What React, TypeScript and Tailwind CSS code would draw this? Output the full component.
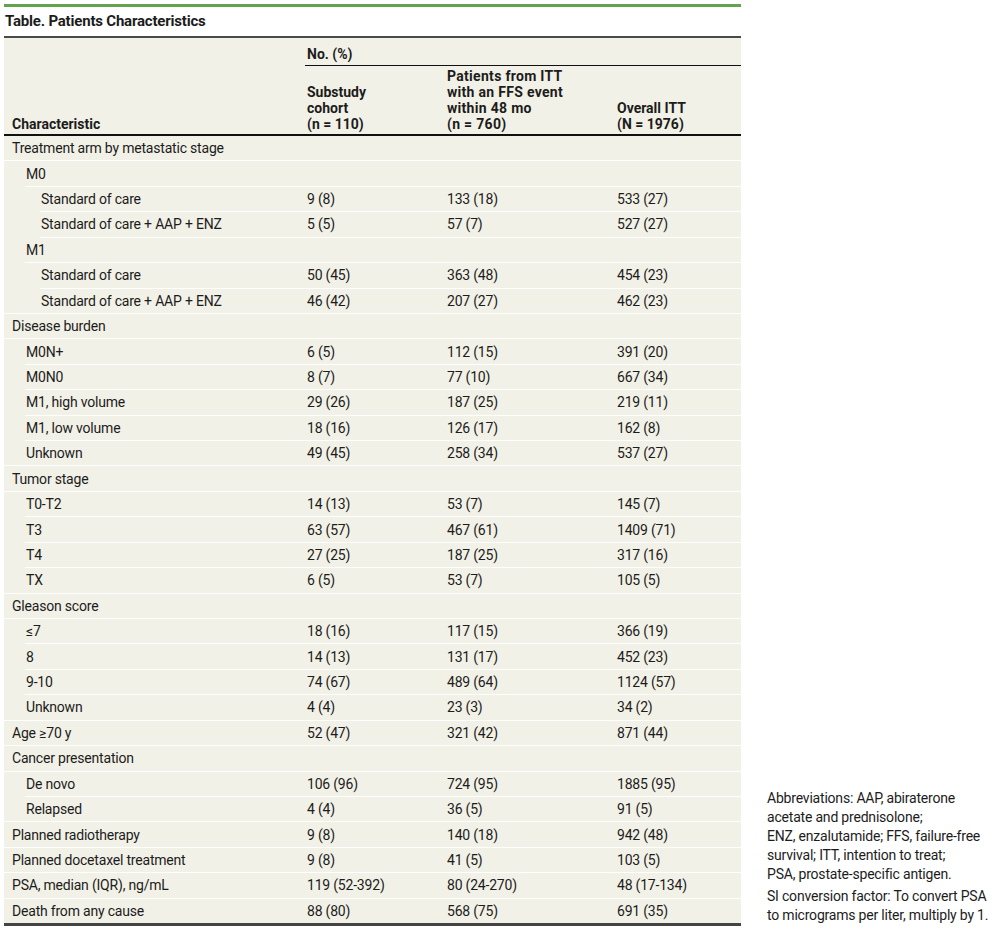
import React from "react";

type Row = [string, number, string, string, string];

const rows: Row[] = [
  ["Treatment arm by metastatic stage", 0, "", "", ""],
  ["M0", 1, "", "", ""],
  ["Standard of care", 2, "9 (8)", "133 (18)", "533 (27)"],
  ["Standard of care + AAP + ENZ", 2, "5 (5)", "57 (7)", "527 (27)"],
  ["M1", 1, "", "", ""],
  ["Standard of care", 2, "50 (45)", "363 (48)", "454 (23)"],
  ["Standard of care + AAP + ENZ", 2, "46 (42)", "207 (27)", "462 (23)"],
  ["Disease burden", 0, "", "", ""],
  ["M0N+", 1, "6 (5)", "112 (15)", "391 (20)"],
  ["M0N0", 1, "8 (7)", "77 (10)", "667 (34)"],
  ["M1, high volume", 1, "29 (26)", "187 (25)", "219 (11)"],
  ["M1, low volume", 1, "18 (16)", "126 (17)", "162 (8)"],
  ["Unknown", 1, "49 (45)", "258 (34)", "537 (27)"],
  ["Tumor stage", 0, "", "", ""],
  ["T0-T2", 1, "14 (13)", "53 (7)", "145 (7)"],
  ["T3", 1, "63 (57)", "467 (61)", "1409 (71)"],
  ["T4", 1, "27 (25)", "187 (25)", "317 (16)"],
  ["TX", 1, "6 (5)", "53 (7)", "105 (5)"],
  ["Gleason score", 0, "", "", ""],
  ["≤7", 1, "18 (16)", "117 (15)", "366 (19)"],
  ["8", 1, "14 (13)", "131 (17)", "452 (23)"],
  ["9-10", 1, "74 (67)", "489 (64)", "1124 (57)"],
  ["Unknown", 1, "4 (4)", "23 (3)", "34 (2)"],
  ["Age ≥70 y", 0, "52 (47)", "321 (42)", "871 (44)"],
  ["Cancer presentation", 0, "", "", ""],
  ["De novo", 1, "106 (96)", "724 (95)", "1885 (95)"],
  ["Relapsed", 1, "4 (4)", "36 (5)", "91 (5)"],
  ["Planned radiotherapy", 0, "9 (8)", "140 (18)", "942 (48)"],
  ["Planned docetaxel treatment", 0, "9 (8)", "41 (5)", "103 (5)"],
  ["PSA, median (IQR), ng/mL", 0, "119 (52-392)", "80 (24-270)", "48 (17-134)"],
  ["Death from any cause", 0, "88 (80)", "568 (75)", "691 (35)"],
];

const textIndent = ["pl-2", "pl-[22px]", "pl-[37px]"];
const lineIndent = ["ml-0", "ml-[21px]", "ml-[36px]"];

function TableRow({ row, next }: { row: Row; next?: Row }) {
  const [label, level, a, b, c] = row;
  const lineClass = next ? (next[1] === 0 ? "ml-0" : lineIndent[level]) : "";
  return (
    <div className="flex flex-col">
      <div className="grid grid-cols-[301px_140px_170px_126px] h-[24.43px] items-center tracking-[-0.2px]">
        <div className={textIndent[level]}>{label}</div>
        <div className="pl-[2px]">{a}</div>
        <div className="pl-[2px]">{b}</div>
        <div className="pl-[2px]">{c}</div>
      </div>
      {next && <div className={"h-px bg-white " + lineClass}></div>}
    </div>
  );
}

export default function App() {
  return (
    <div
      className="flex gap-[26px] pl-1 pt-1 text-[14px] text-[#1c1c1c]"
      style={{ fontFamily: "Roboto, 'Liberation Sans', sans-serif" }}
    >
      <div className="w-[737px] shrink-0">
        <div className="h-[3px] bg-[#63a24f]"></div>
        <div className="h-[29px] flex items-center pl-[1px] text-[15px] font-bold tracking-[-0.2px]">
          Table. Patients Characteristics
        </div>
        <div className="h-[2px] bg-[#4a4a4a]"></div>
        <div className="bg-[#f2f1e7] leading-4">
          <div className="grid grid-cols-[301px_436px] border-b-2 border-[#111]">
            <div className="pl-2 flex items-end pb-[2px] font-bold">Characteristic</div>
            <div className="flex flex-col">
              <div className="h-[28px] flex items-end pb-[3px] pl-[2px] border-b border-[#111] font-bold">
                No. (%)
              </div>
              <div className="grid grid-cols-[140px_170px_126px] pt-[2px] pb-[2px] font-bold">
                <div className="pl-[2px] flex items-end">
                  Substudy
                  <br />
                  cohort
                  <br />
                  (n = 110)
                </div>
                <div className="pl-[2px] tracking-[0.3px]">
                  Patients from ITT
                  <br />
                  with an FFS event
                  <br />
                  within 48 mo
                  <br />
                  (n = 760)
                </div>
                <div className="pl-[2px] flex items-end">
                  Overall ITT
                  <br />
                  (N = 1976)
                </div>
              </div>
            </div>
          </div>
          <div className="border-b-[3px] border-[#444]">
            {rows.map((r, i) => (
              <TableRow key={i} row={r} next={rows[i + 1]} />
            ))}
          </div>
        </div>
      </div>
      <div className="w-[235px] flex flex-col justify-end pb-[1px] leading-[19px] whitespace-nowrap tracking-[-0.2px] text-[#1c1c1c]">
        <p>
          Abbreviations: AAP, abiraterone
          <br />
          acetate and prednisolone;
          <br />
          ENZ, enzalutamide; FFS, failure-free
          <br />
          survival; ITT, intention to treat;
          <br />
          PSA, prostate-specific antigen.
        </p>
        <p className="mt-[3px]">
          SI conversion factor: To convert PSA
          <br />
          to micrograms per liter, multiply by 1.
        </p>
      </div>
    </div>
  );
}
